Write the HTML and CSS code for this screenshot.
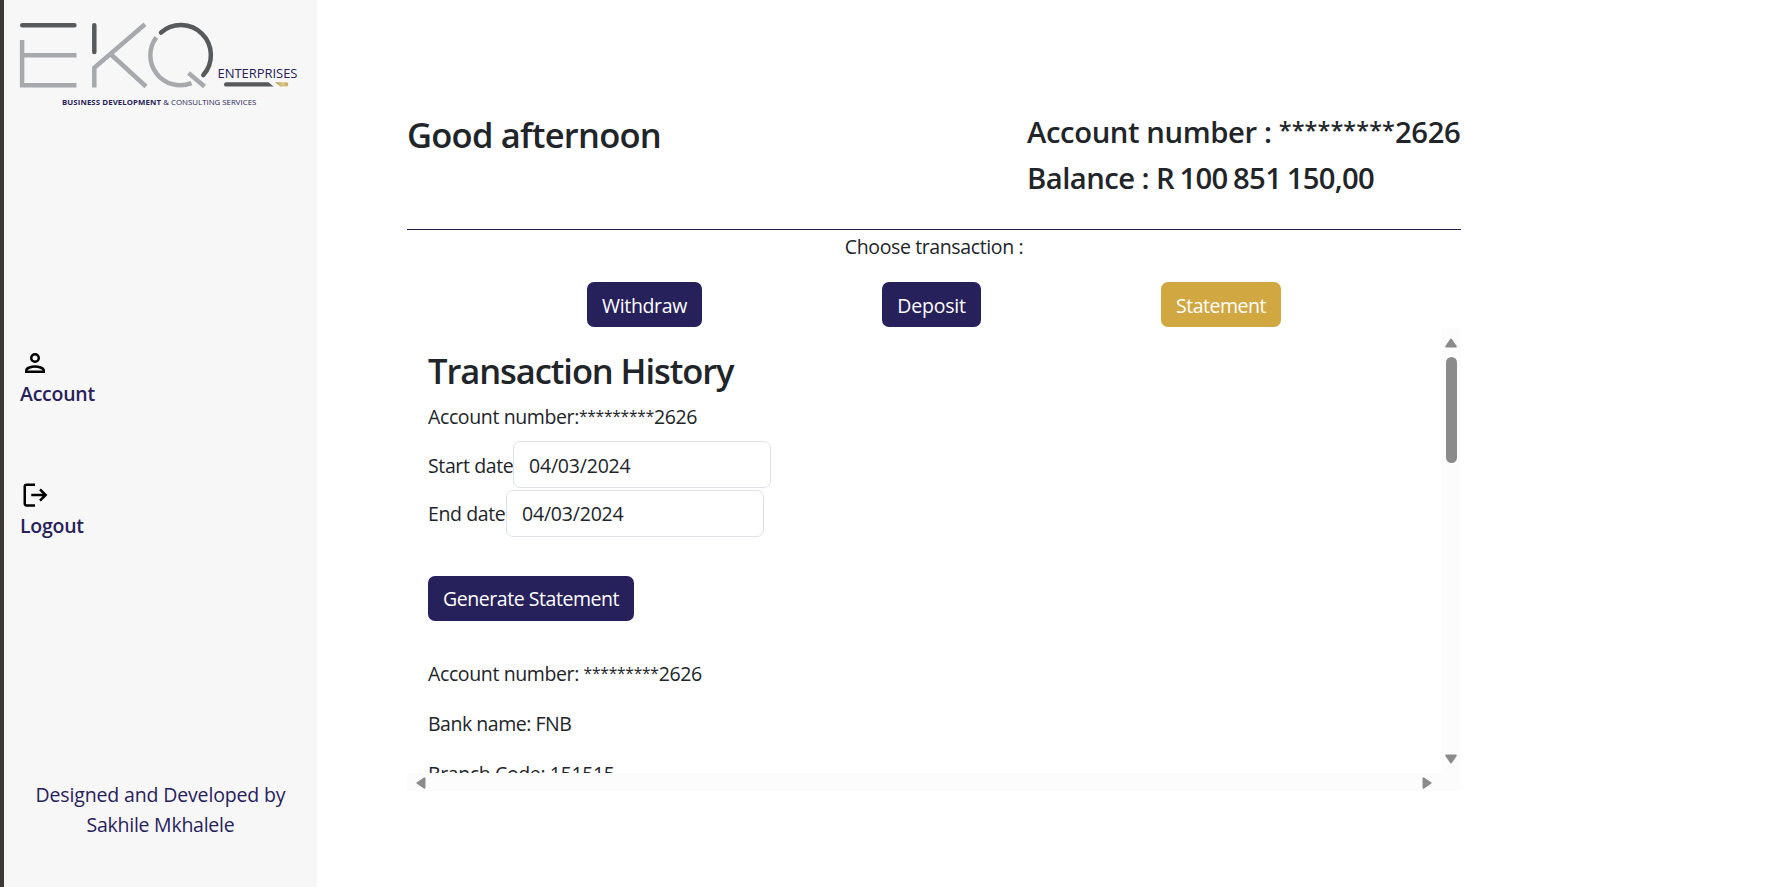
FILE: index.html
```html
<!DOCTYPE html>
<html lang="en">
<head>
<meta charset="utf-8">
<title>EKQ Enterprises</title>
<link rel="stylesheet" href="styles.css">
</head>
<body>
<div class="app">
  <aside class="sidebar">
    <svg class="logo" width="290" height="100" viewBox="10 15 290 100" fill="none" stroke-width="4.500">
      <defs>
        <linearGradient id="gold" x1="0" x2="1"><stop offset="0" stop-color="#b3924a"/><stop offset=".6" stop-color="#dfc98b"/><stop offset="1" stop-color="#c5a55a"/></linearGradient>
      </defs>
      <g stroke="#a7a9ac">
        <path d="M22.100 40V85.200H76.500M22.100 55.200H76.500"/>
        <path d="M94.300 87.400V67.800L145 24.300M110.500 54L146 86.500"/>
        <path d="M156.300 37.300A30 30 0 0 0 191.500 83.100"/>
        <path d="M188.500 73L204.500 86.500"/>
      </g>
      <g stroke="#58595b" stroke-linecap="round">
        <path d="M22.200 25.300H74.400M94.300 25.300V52"/>
        <path d="M161 32.600A30 30 0 0 1 203.300 75"/>
      </g>
      <path fill="#58595b" d="M226.200 82.200H268.500L273.500 86.600H226.200A2.200 2.200 0 0 1 226.200 82.200Z"/>
      <path fill="url(#gold)" d="M275 82.200H286A2.200 2.200 0 0 1 286 86.600H280.200Z"/>
      <g class="logo-text">
        <text x="217.500" y="78" font-size="13" textLength="80"><tspan class="medium">ENTER</tspan>PRISES</text>
        <text class="bold" x="62" y="105" font-size="7.800" textLength="99">BUSINESS DEVELOPMENT</text>
        <text x="163.300" y="105" font-size="7.800" textLength="93">&amp; CONSULTING SERVICES</text>
      </g>
    </svg>
    <nav class="menu">
      <a class="menu-item">
        <svg width="30" height="30" viewBox="0 0 24 24" fill="none" stroke="#000" stroke-width="2"><circle cx="12" cy="8" r="3"/><path d="M5 19V18C5 15.800 9.500 14.800 12 14.800S19 15.800 19 18V19Z"/></svg>
        <span>Account</span>
      </a>
      <a class="menu-item">
        <svg width="30" height="30" viewBox="0 0 24 24" fill="none" stroke="#000" stroke-width="2"><path d="M12 3.700H5.300Q3.800 3.700 3.800 5.200V18.800Q3.800 20.300 5.300 20.300H12M9 12H20.500M16 7.500L20.500 12L16 16.500"/></svg>
        <span>Logout</span>
      </a>
    </nav>
    <p class="credit">Designed and Developed by<br><span class="author">Sakhile Mkhalele</span></p>
  </aside>
  <main class="main">
    <header class="header">
      <h1 class="greeting">Good afternoon</h1>
      <div class="summary">
        <h2>Account number : <span class="mask">*********</span>2626</h2>
        <h2 class="balance">Balance : <span class="amount">R 100 851 150,00</span></h2>
      </div>
    </header>
    <p class="prompt">Choose transaction :</p>
    <div class="actions">
      <button class="btn withdraw">Withdraw</button>
      <button class="btn deposit">Deposit</button>
      <button class="btn statement">Statement</button>
    </div>
    <section class="panel">
      <div class="content">
        <h1 class="history">Transaction History</h1>
        <p class="number">Account number:<span class="mask">*********</span>2626</p>
        <div class="field start-field"><label class="start">Start date</label><span class="input">04/03/2024</span></div>
        <div class="field"><label class="end">End date</label><span class="input">04/03/2024</span></div>
        <button class="btn generate">Generate Statement</button>
        <p class="detail">Account number: <span class="mask">*********</span>2626</p>
        <p class="detail bank">Bank name: FNB</p>
        <p class="detail">Branch Code: 151515</p>
      </div>
      <div class="scroll-y">
        <svg width="12" height="10" viewBox="0 0 12 10"><path d="M6 1.500L10.800 8.500H1.200Z"/></svg>
        <div class="thumb"></div>
        <svg class="down" width="12" height="10" viewBox="0 0 12 10"><path d="M6 8.500L10.800 1.500H1.200Z"/></svg>
      </div>
      <div class="scroll-x">
        <svg width="10" height="12" viewBox="0 0 10 12"><path d="M1.500 6L8.500 1.200V10.800Z"/></svg>
        <svg width="10" height="12" viewBox="0 0 10 12"><path d="M8.500 6L1.500 1.200V10.800Z"/></svg>
      </div>
    </section>
  </main>
</div>
</body>
</html>
```
FILE: styles.css
```css
* { box-sizing: border-box; }
body, h1, h2, p { margin: 0; }
body {
  font: 19.5px/30px "Open Sans", "Noto Sans", sans-serif;
  letter-spacing: -0.38px;
  color: #212529;
  background: #fff;
}
.app { display: flex; height: 887px; overflow: hidden; }
.sidebar {
  width: 317px;
  flex: none;
  display: flex;
  flex-direction: column;
  border-left: 4px solid #3b3835;
  background: #f7f7f7;
  color: #27215b;
  padding: 15px 0 47px 6px;
}
.logo { display: block; flex: none; }
.logo-text { fill: #27215b; letter-spacing: 0; }
.medium { font-weight: 500; }
.bold { font-weight: 700; }
.menu { padding: 233px 0 0 10px; }
.menu-item { display: flex; flex-direction: column; height: 132px; font-weight: 600; letter-spacing: -0.25px; }
.menu-item svg { display: block; }
.menu-item span { margin-top: 1px; }
.credit { margin-top: auto; text-align: center; letter-spacing: -0.15px; padding-right: 6px; }
.author { letter-spacing: -0.25px; }

.main { width: 1054px; margin-left: 90px; padding-top: 113px; }
.header {
  display: flex;
  justify-content: space-between;
  height: 117px;
  border-bottom: 1px solid #221c48;
}
.greeting, .history { font-size: 34.5px; line-height: 43px; font-weight: 600; }
.greeting { letter-spacing: -0.75px; }
.history { letter-spacing: -1.07px; }
.summary { width: 434px; padding-top: 1px; white-space: nowrap; }
.summary h2 { font-size: 29.25px; line-height: 36px; font-weight: 600; letter-spacing: -0.4px; margin-bottom: 10px; }
.summary .mask { letter-spacing: 0.1px; }
.summary .balance { letter-spacing: -0.55px; }
.amount { word-spacing: -1.4px; letter-spacing: -0.7px; }
.mask { font-size: 0.8em; line-height: 0; vertical-align: 0.16em; letter-spacing: -0.25px; }
.prompt { text-align: center; margin-top: 2px; }
.actions { display: flex; justify-content: space-evenly; margin-top: 20px; }
.btn {
  height: 45px;
  padding: 9px 0 6px;
  border: 0;
  border-radius: 7px;
  background: #27215b;
  color: #fff;
  font: inherit;
  letter-spacing: -0.35px;
  text-align: center;
}
.withdraw { width: 115px; }
.deposit { width: 99px; letter-spacing: -0.2px; }
.statement { width: 120px; background: #d1a741; letter-spacing: -0.5px; }
.panel {
  display: grid;
  grid-template: 445px 18px / 1fr 19px;
  margin-top: 1px;
}
.content { overflow: hidden; padding: 21px 0 0 21px; white-space: nowrap; }
.history { margin-bottom: 10px; }
.number { height: 39px; }
.field { display: flex; height: 49px; line-height: 48px; }
.start { width: 85px; }
.end { width: 78px; }
.input {
  width: 258px;
  height: 47px;
  line-height: 45px;
  padding-left: 15px;
  border: 1px solid #dee2e6;
  border-radius: 7px;
  letter-spacing: -0.2px;
}
.start-field { line-height: 50px; }
.start-field .input { line-height: 47px; }
.generate { display: block; width: 206px; margin: 37px 0 38px; padding: 8px 0 7px; letter-spacing: -0.45px; }
.detail { height: 50px; }
.bank { letter-spacing: -0.48px; }
.scroll-y, .scroll-x { display: flex; align-items: center; background: #fcfcfc; }
.scroll-y { flex-direction: column; padding: 10px 1px 9px 0; }
.scroll-x { grid-column: 1 / 3; justify-content: space-between; padding: 1px 29px 0 9px; }
.panel svg { display: block; fill: #8b8b8b; stroke: #8b8b8b; stroke-width: 2; stroke-linejoin: round; }
.thumb { width: 11px; height: 106px; margin-top: 9px; border-radius: 6px; background: #8b8b8b; }
.down { margin-top: auto; }
```
